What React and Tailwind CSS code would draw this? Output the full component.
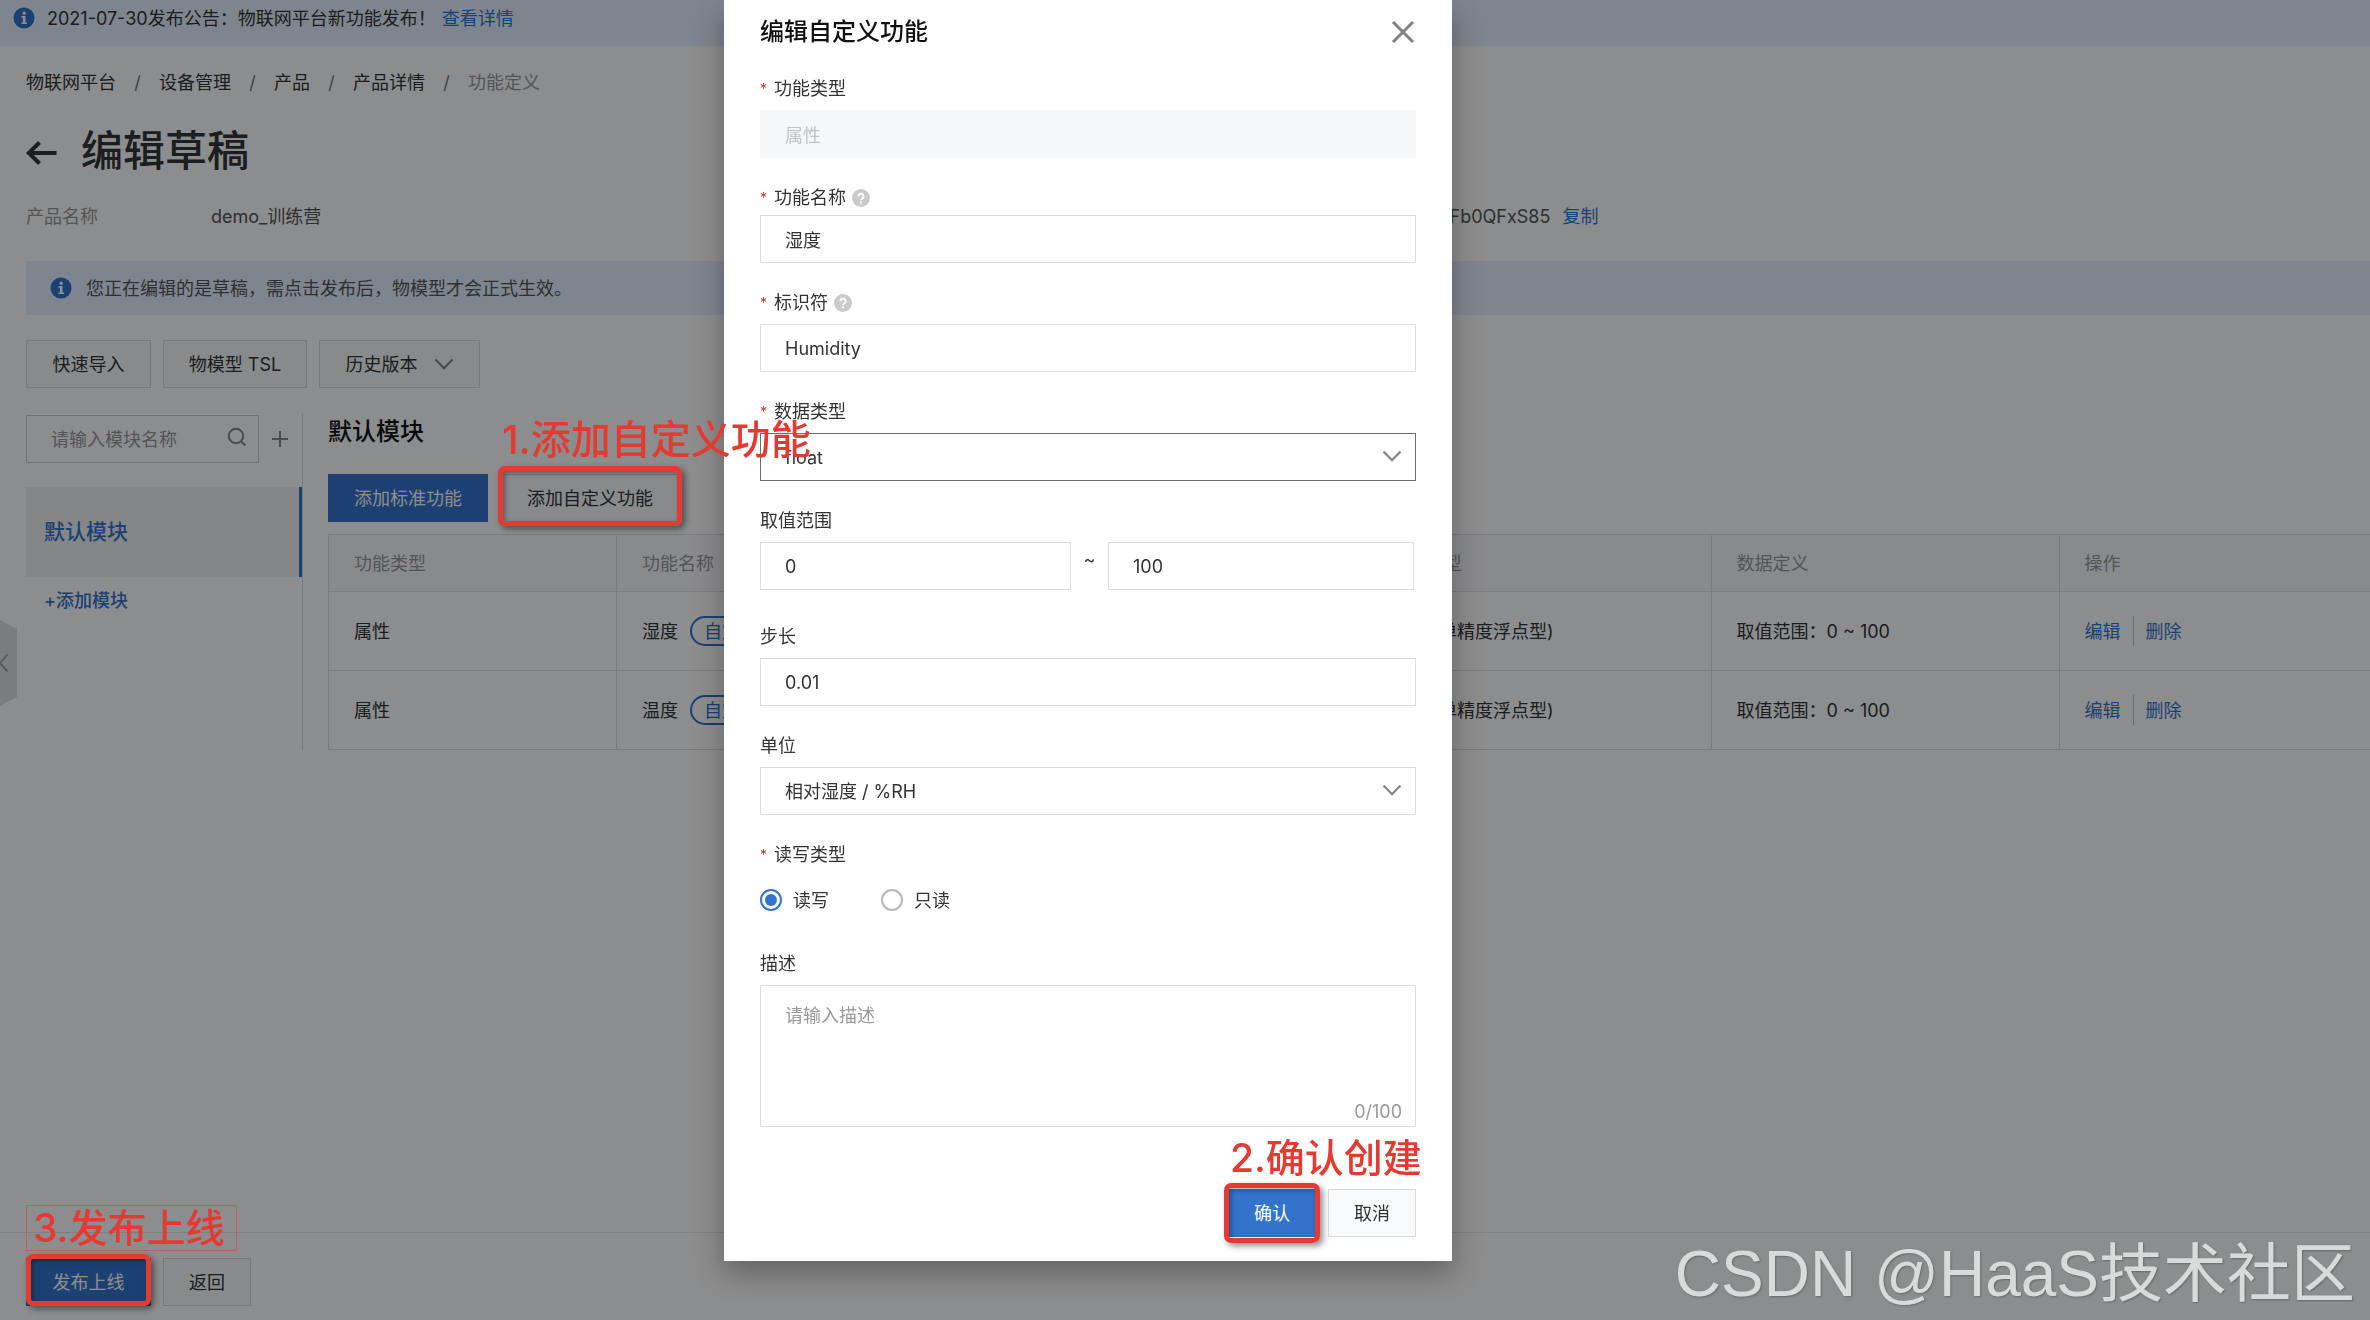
import React, { useState } from 'react';

const crumbs = ['物联网平台', '设备管理', '产品', '产品详情'];

const rows = [
  { id: 1, kind: '属性', name: '湿度', identifier: 'Humidity', dataType: 'float (单精度浮点型)', range: '取值范围：0 ~ 100' },
  { id: 2, kind: '属性', name: '温度', identifier: 'Temperature', dataType: 'float (单精度浮点型)', range: '取值范围：0 ~ 100' },
];

const InfoIcon = () => (
  <svg className="size-[22px] shrink-0" viewBox="0 0 22 22" aria-hidden="true">
    <circle cx="11" cy="11" r="10.5" fill="#3373cc" />
    <circle cx="11.2" cy="6.2" r="1.7" fill="#fff" />
    <path d="M8.4 9h4.1v6.4h1.5v1.7H8.4v-1.7h1.5v-4.7H8.4z" fill="#fff" />
  </svg>
);

const HelpIcon = () => (
  <svg className="ml-1.5 size-[18px]" viewBox="0 0 18 18" aria-hidden="true">
    <circle cx="9" cy="9" r="9" fill="#c9cacc" />
    <path d="M6.4 7.2a2.6 2.6 0 1 1 3.9 2.2c-.9.5-1.3.9-1.3 1.8" fill="none" stroke="#fff" strokeWidth="1.7" />
    <circle cx="9" cy="13.4" r="1.1" fill="#fff" />
  </svg>
);

const ChevronIcon = ({ className }) => (
  <svg className={className} width="20" height="12" viewBox="0 0 20 12" aria-hidden="true">
    <path d="M1.5 1.5L10 10.2L18.5 1.5" fill="none" stroke="#808387" strokeWidth="2.2" />
  </svg>
);

const Button = ({ primary, className = '', children, ...props }) => (
  <button
    type="button"
    className={`flex h-12 items-center justify-center border ${
      primary ? 'border-[#3373cc] bg-[#3373cc] text-white' : 'border-[#d9dbde] bg-[#f9fafb] text-[#333]'
    } ${className}`}
    {...props}
  >
    {children}
  </button>
);

// red frame laid over a control
const Highlight = ({ className }) => (
  <span
    className={`pointer-events-none absolute z-50 rounded-[7px] border-[5px] border-[#e53a31] shadow-[3px_3px_6px_rgba(0,0,0,0.45),inset_2px_2px_5px_rgba(0,0,0,0.35)] ${className}`}
  />
);

const Note = ({ className, children }) => (
  <span className={`pointer-events-none absolute z-50 whitespace-nowrap leading-[44px] font-medium text-[#e53a31] ${className}`}>
    {children}
  </span>
);

const Label = ({ required, help, children, ...props }) => (
  <label className="flex h-[27px] items-center" {...props}>
    {required && <span className="mr-2 w-1.5 text-sm text-[#c8332b]">*</span>}
    {children}
    {help && <HelpIcon />}
  </label>
);

const inputClass =
  'h-12 w-full min-w-0 border border-[#dcdee3] bg-white px-6 text-[#333] outline-none disabled:border-[#f6f7f9] disabled:bg-[#f6f7f9] disabled:text-[#c1c3c7]';

const SelectBox = ({ id, options, active }) => (
  <div className="relative">
    <select
      id={id}
      className={`h-12 w-full appearance-none border bg-white px-6 text-[#333] outline-none ${
        active ? 'border-[#6b6e75]' : 'border-[#dcdee3]'
      }`}
    >
      {options.map((option) => (
        <option key={option}>{option}</option>
      ))}
    </select>
    <ChevronIcon className="pointer-events-none absolute top-[17px] right-3.5" />
  </div>
);

const Radio = ({ id, label, checked, onChange }) => (
  <div className="flex items-center gap-[11px]">
    <input
      type="radio"
      id={id}
      name="access"
      checked={checked}
      onChange={onChange}
      className="size-[22px] appearance-none rounded-full border-2 border-[#b5b7bc] bg-clip-content p-[3px] checked:border-[#3373cc] checked:bg-[#3373cc]"
    />
    <label htmlFor={id}>{label}</label>
  </div>
);

const Sidebar = () => (
  <aside className="w-[277px] shrink-0 border-r border-[#dcdee3] pt-0.5">
    <div className="flex items-center">
      <div className="relative w-[233px]">
        <input
          type="text"
          aria-label="请输入模块名称"
          placeholder="请输入模块名称"
          className="h-12 w-full border border-[#cfd1d5] bg-transparent pr-12 pl-6 placeholder:text-[#999]"
        />
        <svg className="absolute top-3 right-3 size-5" viewBox="0 0 20 20" aria-hidden="true">
          <circle cx="9" cy="9" r="7.2" fill="none" stroke="#888" strokeWidth="2" />
          <path d="M14 14.5l4.5 4" stroke="#888" strokeWidth="2" />
        </svg>
      </div>
      <button type="button" aria-label="添加" className="ml-3">
        <svg className="size-[18px]" viewBox="0 0 18 18" aria-hidden="true">
          <path d="M9 1v16M1 9h16" stroke="#888" strokeWidth="2" />
        </svg>
      </button>
    </div>
    <button
      type="button"
      className="mt-6 flex h-[90px] w-full items-center border-r-[3px] border-[#3373cc] bg-[#f2f3f4] pb-0.5 pl-[18px] text-[21px] font-medium text-[#3373cc]"
    >
      默认模块
    </button>
    <a href="#add" className="mt-2.5 block pl-[18px] font-medium text-[#3373cc]">
      +添加模块
    </a>
  </aside>
);

const FeatureTable = () => {
  const cell = 'border-b border-l border-[#dcdee3] px-[25px] text-left font-normal whitespace-nowrap';
  return (
    <table className="mt-3 w-full table-fixed border-collapse border-t border-[#dcdee3]">
      <thead>
        <tr className="h-[57px] bg-[#f9fafb] text-[#999]">
          <th className={`${cell} w-72`}>功能类型</th>
          <th className={cell}>功能名称</th>
          <th className={cell}>标识符</th>
          <th className={`${cell} w-[347px]`}>数据类型</th>
          <th className={`${cell} w-[348px]`}>数据定义</th>
          <th className={`${cell} w-[311px]`}>操作</th>
        </tr>
      </thead>
      <tbody>
        {rows.map((row) => (
          <tr key={row.id} className="h-[79px]">
            <td className={cell}>{row.kind}</td>
            <td className={cell}>
              <div className="flex items-center">
                {row.name}
                <span className="ml-3 flex h-[30px] items-center rounded-full border-2 border-[#3373cc] px-3 text-[#3373cc]">
                  自定义
                </span>
              </div>
            </td>
            <td className={cell}>{row.identifier}</td>
            <td className={cell}>{row.dataType}</td>
            <td className={cell}>{row.range}</td>
            <td className={cell}>
              <div className="flex items-center text-[#3373cc]">
                <a href="#edit">编辑</a>
                <span className="mx-3 h-[30px] w-px bg-[#c4c6cb]" />
                <a href="#delete">删除</a>
              </div>
            </td>
          </tr>
        ))}
      </tbody>
    </table>
  );
};

const EditModal = () => {
  const [access, setAccess] = useState('rw');

  return (
    <div className="fixed inset-0 z-40 flex items-start justify-center bg-[#010305]/45 pr-[194px]">
      <div
        role="dialog"
        aria-labelledby="modal-title"
        className="w-[728px] bg-white px-9 pb-6 shadow-[0_12px_28px_rgba(0,0,0,0.3)]"
      >
        <div className="flex h-16 items-center justify-between">
          <h2 id="modal-title" className="text-2xl font-medium text-[#111]">编辑自定义功能</h2>
          <button type="button" aria-label="关闭">
            <svg className="size-[26px]" viewBox="0 0 26 26" aria-hidden="true">
              <path d="M3 3l20 20M23 3l-20 20" stroke="#808080" strokeWidth="3" />
            </svg>
          </button>
        </div>

        <form className="mt-[11px] flex flex-col gap-[26px]">
          <div className="flex flex-col gap-2">
            <Label required htmlFor="kind">功能类型</Label>
            <input id="kind" type="text" className={inputClass} defaultValue="属性" disabled />
          </div>
          <div className="flex flex-col gap-1">
            <Label required help htmlFor="name">功能名称</Label>
            <input id="name" type="text" className={inputClass} defaultValue="湿度" />
          </div>
          <div className="flex flex-col gap-2">
            <Label required help htmlFor="identifier">标识符</Label>
            <input id="identifier" type="text" className={inputClass} defaultValue="Humidity" />
          </div>
          <div className="flex flex-col gap-2">
            <Label required htmlFor="data-type">数据类型</Label>
            <SelectBox id="data-type" options={['float', 'int32', 'double']} active />
          </div>
          <div className="flex flex-col gap-2 pb-[7px]">
            <Label htmlFor="min">取值范围</Label>
            <div className="flex pr-0.5">
              <input id="min" type="text" className={`${inputClass} basis-[311px]`} defaultValue="0" />
              <span className="w-[37px] shrink-0 pt-1 text-center">~</span>
              <input type="text" aria-label="最大值" className={`${inputClass} basis-[306px]`} defaultValue="100" />
            </div>
          </div>
          <div className="flex flex-col gap-2">
            <Label htmlFor="step">步长</Label>
            <input id="step" type="text" className={inputClass} defaultValue="0.01" />
          </div>
          <div className="flex flex-col gap-2">
            <Label htmlFor="unit">单位</Label>
            <SelectBox id="unit" options={['相对湿度 / %RH']} />
          </div>
          <div className="flex flex-col gap-2">
            <Label required htmlFor="rw">读写类型</Label>
            <div className="flex h-12 items-center gap-[52px]">
              <Radio id="rw" label="读写" checked={access === 'rw'} onChange={() => setAccess('rw')} />
              <Radio id="r" label="只读" checked={access === 'r'} onChange={() => setAccess('r')} />
            </div>
          </div>
          <div className="flex flex-col gap-2">
            <Label htmlFor="desc">描述</Label>
            <div className="relative flex">
              <textarea
                id="desc"
                placeholder="请输入描述"
                className="h-[142px] w-full resize-none border border-[#dcdee3] px-6 py-4 placeholder:text-[#999]"
              />
              <span className="absolute right-3.5 bottom-0.5 text-[#999]">0/100</span>
            </div>
          </div>
        </form>

        <div className="mt-[62px] flex justify-end gap-3">
          <div className="relative">
            <Note className="-top-[53px] left-0.5 text-[39px]">2.确认创建</Note>
            <Button primary className="w-[88px]">确认</Button>
            <Highlight className="-inset-x-1 -inset-y-1.5" />
          </div>
          <Button className="w-[88px]">取消</Button>
        </div>
      </div>
    </div>
  );
};

export default function App() {
  return (
    <div className="relative flex min-h-screen flex-col overflow-hidden bg-white font-[Inter,'Noto_Sans_CJK_SC',sans-serif] text-lg leading-[27px] text-[#333]">
      <div className="flex h-[46px] items-center bg-[#e5f1ff] pb-2.5 pl-[13px]">
        <InfoIcon />
        <p className="ml-3">
          2021-07-30发布公告：物联网平台新功能发布！
          <a href="#notice" className="ml-1.5 text-[#3373cc]">查看详情</a>
        </p>
      </div>

      <main className="pl-[26px]">
        <nav className="mt-[23px] flex">
          {crumbs.map((crumb) => (
            <React.Fragment key={crumb}>
              <a href="#crumb">{crumb}</a>
              <span className="w-[43px] text-center text-[#777]">/</span>
            </React.Fragment>
          ))}
          <span className="text-[#999]">功能定义</span>
        </nav>

        <div className="mt-[27px] flex h-14 items-center">
          <button type="button" aria-label="返回" className="mt-1">
            <svg className="h-6 w-[31px]" viewBox="0 0 31 24" aria-hidden="true">
              <path d="M13.5 1.5L2.8 12l10.7 10.5M2.8 12H30.5" fill="none" stroke="#333" strokeWidth="4" />
            </svg>
          </button>
          <h1 className="ml-6 text-[42px] leading-[56px] font-medium">编辑草稿</h1>
        </div>

        <dl className="mt-6 flex text-[#555]">
          <div className="flex basis-[52%]">
            <dt className="w-[185px] text-[#999]">产品名称</dt>
            <dd>demo_训练营</dd>
          </div>
          <div className="flex">
            <dt className="w-[188px] text-[#999]">ProductKey</dt>
            <dd>
              a1Fb0QFxS85
              <a href="#copy" className="ml-3 text-[#3373cc]">复制</a>
            </dd>
          </div>
        </dl>

        <div className="mt-[31px] flex h-[54px] items-center bg-[#e5f1ff] pl-6 text-[#555]">
          <InfoIcon />
          <p className="ml-3.5">您正在编辑的是草稿，需点击发布后，物模型才会正式生效。</p>
        </div>

        <div className="mt-[25px] flex gap-3">
          <Button className="w-[125px]">快速导入</Button>
          <Button className="w-36">物模型 TSL</Button>
          <Button className="w-[161px] gap-4">
            历史版本
            <ChevronIcon />
          </Button>
        </div>

        <div className="mt-[25px] flex">
          <Sidebar />
          <section className="ml-[25px] min-w-0 flex-1">
            <h2 className="mt-px text-2xl leading-9 font-medium text-[#111]">默认模块</h2>
            <div className="mt-6 flex gap-3">
              <Button primary className="w-[160px]">添加标准功能</Button>
              <div className="relative">
                <Note className="-top-14 left-0.5 text-[40px]">1.添加自定义功能</Note>
                <Button className="w-[180px]">添加自定义功能</Button>
                <Highlight className="-inset-x-0.5 -top-2 -bottom-1" />
              </div>
            </div>
            <FeatureTable />
          </section>
        </div>
      </main>

      <footer className="mt-auto flex gap-3 border-t border-[#e6e7ea] px-[26px] pt-[25px] pb-3.5">
        <div className="relative">
          <Note className="-top-[53px] left-0 border border-[#e53a31]/50 pr-3 pl-1.5 text-[39px]">3.发布上线</Note>
          <Button primary className="w-[125px]">发布上线</Button>
          <Highlight className="inset-x-0 -top-1 bottom-0" />
        </div>
        <Button className="w-[88px]">返回</Button>
      </footer>

      <button type="button" aria-label="收起" className="absolute top-[620px] left-0">
        <svg className="h-[86px] w-[17px]" viewBox="0 0 17 86" aria-hidden="true">
          <path d="M0 0L17 9V77L0 86z" fill="#dfe0e2" />
          <path d="M7.5 34.5L0 43l7.5 8.5" fill="none" stroke="#999" strokeWidth="1.8" />
        </svg>
      </button>

      <EditModal />

      <div className="pointer-events-none fixed right-[15px] bottom-2 z-50 font-['Liberation_Sans','Noto_Sans_CJK_SC',sans-serif] text-[64px] leading-[76px] text-[#d9dbda] [text-shadow:1px_1px_2px_rgba(0,0,0,0.25)]">
        CSDN @HaaS技术社区
      </div>
    </div>
  );
}
